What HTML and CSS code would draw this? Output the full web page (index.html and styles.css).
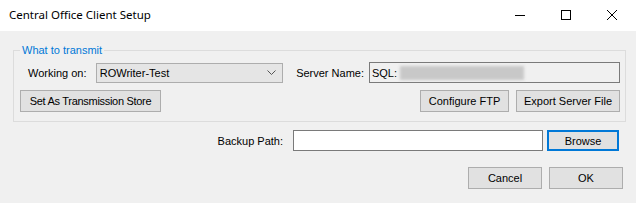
FILE: index.html
```html
<!DOCTYPE html>
<html>
<head>
<meta charset="utf-8">
<link rel="stylesheet" href="styles.css">
</head>
<body>
<div class="window">
  <div class="titlebar">
    <div class="title">Central Office Client Setup</div>
    <div class="controls">
      <div class="ctl"><svg width="10" height="10" viewBox="0 0 10 10"><path d="M0 5.5H10" stroke="#000" stroke-width="1"/></svg></div>
      <div class="ctl"><svg width="10" height="10" viewBox="0 0 10 10"><rect x="0.5" y="0.5" width="9" height="9" fill="none" stroke="#000" stroke-width="1"/></svg></div>
      <div class="ctl"><svg width="10" height="10" viewBox="0 0 10 10"><path d="M0 0L10 10M10 0L0 10" stroke="#000" stroke-width="1"/></svg></div>
    </div>
  </div>
  <div class="client">
    <div class="group">
      <span class="group-title">What to transmit</span>
      <div class="row row1">
        <span class="lbl lbl-work">Working on:</span>
        <div class="combo">
          <span>ROWriter-Test</span>
          <svg class="chev" width="9" height="5" viewBox="0 0 9 5"><path d="M0.5 0.5L4.5 4.5L8.5 0.5" fill="none" stroke="#555" stroke-width="1"/></svg>
        </div>
        <span class="lbl lbl-server">Server Name:</span>
        <div class="textbox readonly">
          <span>SQL:</span>
          <div class="blurred"></div>
        </div>
      </div>
      <div class="row row2">
        <button class="btn btn-store">Set As Transmission Store</button>
        <div class="spacer"></div>
        <button class="btn btn-ftp">Configure FTP</button>
        <button class="btn btn-export">Export Server File</button>
      </div>
    </div>
    <div class="row backup">
      <span class="lbl">Backup Path:</span>
      <div class="textbox path"></div>
      <button class="btn btn-browse">Browse</button>
    </div>
    <div class="row actions">
      <button class="btn btn-dlg">Cancel</button>
      <button class="btn btn-dlg">OK</button>
    </div>
  </div>
</div>
</body>
</html>
```

FILE: styles.css
```css
html, body {
  margin: 0;
  padding: 0;
}
body {
  width: 636px;
  height: 203px;
  overflow: hidden;
  font-family: "Liberation Sans", Arial, sans-serif;
  font-size: 11px;
  color: #000;
}
.window {
  width: 636px;
  height: 203px;
  display: flex;
  flex-direction: column;
}
.titlebar {
  height: 31px;
  background: #fff;
  display: flex;
  align-items: flex-start;
}
.title {
  font-family: "Noto Sans", "Open Sans", sans-serif;
  font-size: 11.5px;
  line-height: 16px;
  padding: 7px 0 0 9px;
  flex: 1;
}
.controls {
  display: flex;
  padding-top: 10px;
  padding-right: 19px;
}
.ctl {
  width: 10px;
  height: 10px;
  margin-left: 36px;
  display: flex;
}
.client {
  flex: 1;
  background: #f0f0f0;
  padding: 19px 10px 0 13px;
  display: flex;
  flex-direction: column;
}
.group {
  position: relative;
  border: 1px solid #dcdcdc;
  padding: 11px 5px 9px 6px;
}
.group-title {
  position: absolute;
  top: -8px;
  left: 6px;
  padding: 0 2px;
  background: #f0f0f0;
  color: #0078d7;
  line-height: 14px;
}
.row {
  display: flex;
  align-items: center;
}
.row1 {
  padding-left: 8px;
}
.lbl {
  white-space: nowrap;
}
.lbl-work {
  width: 68px;
}
.lbl-server {
  width: 73px;
  margin-left: 13px;
}
.combo {
  width: 188px;
  height: 20px;
  box-sizing: border-box;
  background: #e5e5e5;
  border: 1px solid #adadad;
  display: flex;
  align-items: center;
  padding-left: 3px;
}
.combo span {
  flex: 1;
}
.chev {
  margin-right: 6px;
}
.textbox {
  height: 21px;
  box-sizing: border-box;
  border: 1px solid #7a7a7a;
  background: #fff;
}
.textbox.readonly {
  width: 252px;
  background: #f0f0f0;
  display: flex;
  align-items: center;
  padding-left: 2px;
}
.blurred {
  width: 124px;
  height: 14px;
  margin-left: 3px;
  background: #c8c8c8;
  filter: blur(1.5px);
}
.row2 {
  margin-top: 7px;
}
.spacer {
  flex: 1;
}
.btn {
  height: 22px;
  box-sizing: border-box;
  background: #e1e1e1;
  border: 1px solid #adadad;
  font-family: "Liberation Sans", Arial, sans-serif;
  font-size: 11px;
  color: #000;
  padding: 0;
  margin: 0;
}
.btn-store {
  width: 141px;
  letter-spacing: -0.3px;
}
.btn-ftp {
  width: 89px;
}
.btn-export {
  width: 104px;
  margin-left: 7px;
}
.backup {
  margin-top: 8px;
  justify-content: flex-end;
  padding-right: 7px;
}
.backup .lbl {
  margin-right: 10px;
}
.textbox.path {
  width: 250px;
}
.btn-browse {
  width: 72px;
  height: 21px;
  margin-left: 4px;
  border: 2px solid #0078d7;
}
.actions {
  margin-top: 16px;
  justify-content: flex-end;
  padding-right: 3px;
}
.btn-dlg {
  width: 74px;
  margin-left: 7px;
}
```
